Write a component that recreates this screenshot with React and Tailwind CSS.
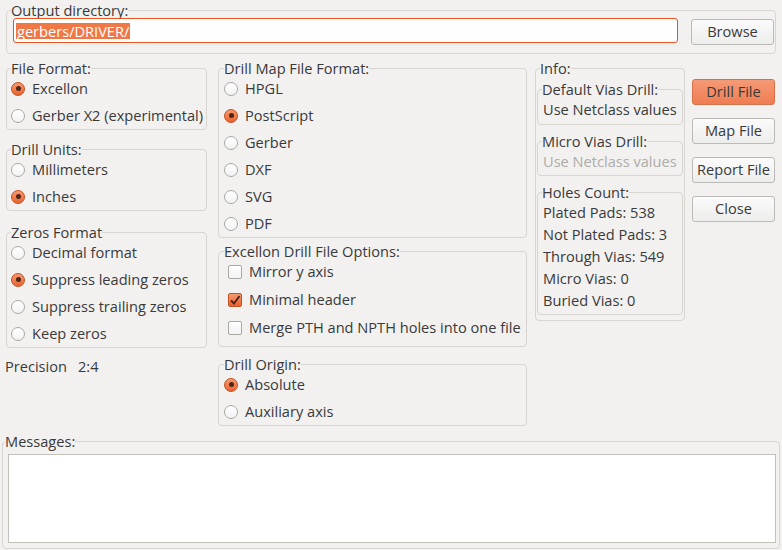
import React from "react";

function Radio({ checked, label }) {
  return (
    <div className="flex items-center h-[27px]">
      <span
        className={
          checked
            ? "w-[14px] h-[14px] shrink-0 rounded-full border border-[#c4521f] bg-linear-to-b from-[#f8986f] to-[#e9622c] flex items-center justify-center"
            : "w-[14px] h-[14px] shrink-0 rounded-full border border-[#aaa8a4] bg-linear-to-b from-white to-[#f3f3f3]"
        }
      >
        {checked && <span className="w-[5px] h-[5px] rounded-full bg-[#4d2618]" />}
      </span>
      <span className="ml-[7px] whitespace-nowrap">{label}</span>
    </div>
  );
}

function Check({ checked, label }) {
  return (
    <div className="flex items-center h-[28px] ml-[4px]">
      <span
        className={
          checked
            ? "w-[14px] h-[14px] shrink-0 rounded-[2px] border border-[#c4521f] bg-linear-to-b from-[#f8986f] to-[#e9622c] flex items-center justify-center"
            : "w-[14px] h-[14px] shrink-0 rounded-[2px] border border-[#aaa8a4] bg-linear-to-b from-white to-[#f3f3f3]"
        }
      >
        {checked && (
          <svg width="12" height="12" viewBox="0 0 12 12">
            <path d="M2 6.5 L5 9.5 L10.5 2" fill="none" stroke="#4d2618" strokeWidth="2" />
          </svg>
        )}
      </span>
      <span className="ml-[7px] whitespace-nowrap">{label}</span>
    </div>
  );
}

function Group({ label, className = "", children }) {
  return (
    <fieldset className={"border border-[#d8d5d1] rounded-[4px] min-w-0 " + className}>
      <legend className="h-[14px] leading-[14px] whitespace-nowrap">{label}</legend>
      {children}
    </fieldset>
  );
}

function Btn({ children, primary }) {
  return (
    <div
      className={
        primary
          ? "h-[26px] rounded-[3px] border border-[#d8714a] bg-linear-to-b from-[#f59a76] to-[#ef7d52] flex items-center justify-center whitespace-nowrap"
          : "h-[26px] rounded-[3px] border border-[#bcbab6] bg-linear-to-b from-[#fbfbfb] to-[#ededec] flex items-center justify-center whitespace-nowrap"
      }
    >
      {children}
    </div>
  );
}

export default function App() {
  return (
    <div
      className="w-[782px] h-[550px] overflow-hidden bg-[#f2f1f0] text-[#3a3a3a] text-[14.6px] pt-[3px]"
      style={{ fontFamily: '"Open Sans", "Noto Sans", "DejaVu Sans", sans-serif' }}
    >
      {/* Output directory */}
      <Group label="Output directory:" className="ml-[6px] w-[770px] pl-[4px] pb-[8px]">
        <div className="flex items-start mt-[1px]">
          <div className="flex-1 ml-[2px] h-[25px] border border-[#e95420] rounded-[3px] bg-white flex items-center pl-[2px]">
            <span className="bg-[#f07746] text-white leading-[16px] px-[1px]">gerbers/DRIVER/</span>
          </div>
          <div className="w-[83px] ml-[13px] mr-[1px] mt-[1px]">
            <Btn>Browse</Btn>
          </div>
        </div>
      </Group>

      {/* Middle */}
      <div className="flex mt-[7px] items-start">
        {/* Column 1 */}
        <div className="ml-[6px] w-[201px] flex flex-col">
          <Group label="File Format:" className="pl-[4px]">
            <Radio checked label="Excellon" />
            <Radio label="Gerber X2 (experimental)" />
          </Group>
          <Group label="Drill Units:" className="pl-[4px] mt-[12px]">
            <Radio label="Millimeters" />
            <Radio checked label="Inches" />
          </Group>
          <Group label="Zeros Format" className="pl-[4px] mt-[14px]">
            <Radio label="Decimal format" />
            <Radio checked label="Suppress leading zeros" />
            <Radio label="Suppress trailing zeros" />
            <Radio label="Keep zeros" />
          </Group>
          <div className="flex mt-[10px] h-[17px] items-center -ml-[1px]">
            <span>Precision</span>
            <span className="ml-[11px]">2:4</span>
          </div>
        </div>

        {/* Column 2 */}
        <div className="ml-[11px] w-[309px] flex flex-col">
          <Group label="Drill Map File Format:" className="pl-[5px]">
            <Radio label="HPGL" />
            <Radio checked label="PostScript" />
            <Radio label="Gerber" />
            <Radio label="DXF" />
            <Radio label="SVG" />
            <Radio label="PDF" />
          </Group>
          <Group label="Excellon Drill File Options:" className="pl-[5px] pb-[4px] mt-[6px]">
            <Check label="Mirror y axis" />
            <Check checked label="Minimal header" />
            <Check label="Merge PTH and NPTH holes into one file" />
          </Group>
          <Group label="Drill Origin:" className="pl-[5px] mt-[10px]">
            <Radio checked label="Absolute" />
            <Radio label="Auxiliary axis" />
          </Group>
        </div>

        {/* Column 3 */}
        <div className="ml-[8px] w-[150px]">
          <Group label="Info:" className="pl-[4px] pb-[5px]">
            <div className="-ml-[3px] mr-[1px] flex flex-col">
              <Group label="Default Vias Drill:" className="pl-[4px] mt-[7px]">
                <div className="h-[28px] flex items-center ml-[1px] whitespace-nowrap">Use Netclass values</div>
              </Group>
              <Group label="Micro Vias Drill:" className="pl-[4px] mt-[9px]">
                <div className="h-[27px] flex items-center ml-[1px] whitespace-nowrap text-[#aeaca8]">Use Netclass values</div>
              </Group>
              <Group label="Holes Count:" className="pl-[4px] mt-[9px] pt-[3px] pb-[2px]">
                <div className="ml-[1px]">
                  <div className="h-[22px] flex items-center whitespace-nowrap">Plated Pads: 538</div>
                  <div className="h-[22px] flex items-center whitespace-nowrap">Not Plated Pads: 3</div>
                  <div className="h-[22px] flex items-center whitespace-nowrap">Through Vias: 549</div>
                  <div className="h-[22px] flex items-center whitespace-nowrap">Micro Vias: 0</div>
                  <div className="h-[22px] flex items-center whitespace-nowrap">Buried Vias: 0</div>
                </div>
              </Group>
            </div>
          </Group>
        </div>

        {/* Column 4 */}
        <div className="ml-[7px] w-[83px] pt-[18px] flex flex-col gap-[13px]">
          <Btn primary>Drill File</Btn>
          <Btn>Map File</Btn>
          <Btn>Report File</Btn>
          <Btn>Close</Btn>
        </div>
      </div>

      {/* Messages */}
      <Group label="Messages:" className="ml-[2px] w-[778px] mt-[8px] pl-[2px] pr-[3px] pb-[5px]">
        <div className="ml-[3px] mt-[6px] h-[89px] bg-white border border-[#c3c0bb]" />
      </Group>
    </div>
  );
}
